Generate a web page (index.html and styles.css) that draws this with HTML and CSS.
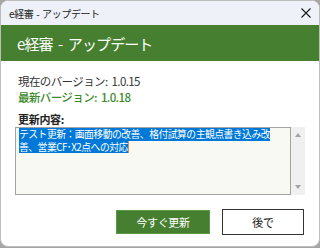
FILE: index.html
```html
<!DOCTYPE html>
<html lang="ja">
<head>
<meta charset="utf-8">
<link rel="stylesheet" href="styles.css">
</head>
<body>
<div class="window">
  <div class="titlebar">
    <span class="title">e経審 - アップデート</span>
    <svg class="close" width="10" height="10" viewBox="0 0 10 10"><path d="M0.5 0.5L9.5 9.5M9.5 0.5L0.5 9.5" stroke="#1a1a1a" stroke-width="1.1" fill="none"/></svg>
  </div>
  <div class="header">e経審 - アップデート</div>
  <div class="content">
    <div class="line current">現在のバージョン: 1.0.15</div>
    <div class="line latest">最新バージョン: 1.0.18</div>
    <div class="label">更新内容:</div>
    <div class="notes">
      <div class="box">
        <div class="sel">テスト更新：画面移動の改善、格付試算の主観点書き込み改</div>
        <div class="selrow"><div class="sel">善、営業CF･X2点への対応</div><span class="caret"></span></div>
      </div>
      <div class="scroll">
        <span class="arrow up"></span>
        <span class="arrow down"></span>
      </div>
    </div>
    <div class="buttons">
      <div class="btn primary">今すぐ更新</div>
      <div class="btn secondary">後で</div>
    </div>
  </div>
</div>
</body>
</html>
```
FILE: styles.css
```css
html, body {
  margin: 0;
  padding: 0;
  background: #a6a6a6;
}
body {
  width: 320px;
  height: 248px;
  font-family: "Noto Sans CJK JP", "Noto Sans", sans-serif;
}
.window {
  box-sizing: border-box;
  width: 320px;
  height: 247px;
  border: 1px solid #bdbdbd;
  border-radius: 8px;
  overflow: hidden;
  background: #ffffff;
  display: flex;
  flex-direction: column;
}
.titlebar {
  height: 24px;
  background: #eef1f8;
  display: flex;
  align-items: center;
  justify-content: space-between;
  padding: 0 8px 0 8px;
  flex-shrink: 0;
}
.title {
  font-size: 10px;
  letter-spacing: -0.4px;
  word-spacing: 1px;
  color: #1a1a1a;
}
.header {
  height: 36px;
  background: #457f2f;
  color: #ffffff;
  font-size: 15px;
  letter-spacing: -0.9px;
  word-spacing: 3px;
  line-height: 36px;
  padding: 1px 0 0 16px;
  box-sizing: border-box;
  flex-shrink: 0;
}
.content {
  padding: 12px 13px 0 14px;
  display: flex;
  flex-direction: column;
}
.line {
  font-size: 11.5px;
  line-height: 16px;
  padding-left: 3px;
  letter-spacing: -0.6px;
  word-spacing: 2px;
}
.current {
  color: #333333;
}
.latest {
  color: #3b8a2b;
  font-weight: 500;
}
.label {
  margin-top: 7px;
  font-size: 11px;
  line-height: 14px;
  padding-left: 3px;
  font-weight: 700;
  color: #222222;
  letter-spacing: -0.3px;
}
.notes {
  display: flex;
  height: 68px;
  margin-top: 1px;
}
.box {
  box-sizing: border-box;
  width: 276px;
  height: 68px;
  border: 1px solid #a3a3a3;
  background: #f9f9f4;
  padding: 0 3px;
  font-size: 9.8px;
  letter-spacing: -0.5px;
  overflow: hidden;
}
.sel {
  width: fit-content;
  background: #0078d7;
  color: #ffffff;
  line-height: 12.5px;
  height: 12.5px;
  white-space: nowrap;
}
.selrow {
  display: flex;
  align-items: flex-start;
}
.caret {
  width: 1px;
  height: 12px;
  background: #e0903a;
}
.scroll {
  width: 14px;
  height: 68px;
  background: #f0f0f0;
  display: flex;
  flex-direction: column;
  justify-content: space-between;
  align-items: center;
  padding: 6px 0 6px 0;
  box-sizing: border-box;
}
.arrow {
  width: 0;
  height: 0;
  border-left: 3.5px solid transparent;
  border-right: 3.5px solid transparent;
}
.arrow.up {
  border-bottom: 4px solid #a3a3a3;
}
.arrow.down {
  border-top: 4px solid #a3a3a3;
}
.buttons {
  display: flex;
  justify-content: flex-end;
  align-items: center;
  gap: 12px;
  margin-top: 14px;
  padding-right: 2px;
}
.btn {
  box-sizing: border-box;
  display: flex;
  align-items: center;
  justify-content: center;
  font-size: 11px;
  letter-spacing: -0.3px;
}
.primary {
  width: 94px;
  height: 24px;
  background: #457f2f;
  border: 1px solid #5a9a45;
  color: #ffffff;
}
.secondary {
  width: 82px;
  height: 26px;
  background: #ffffff;
  border: 1px solid #333333;
  color: #222222;
}
```
